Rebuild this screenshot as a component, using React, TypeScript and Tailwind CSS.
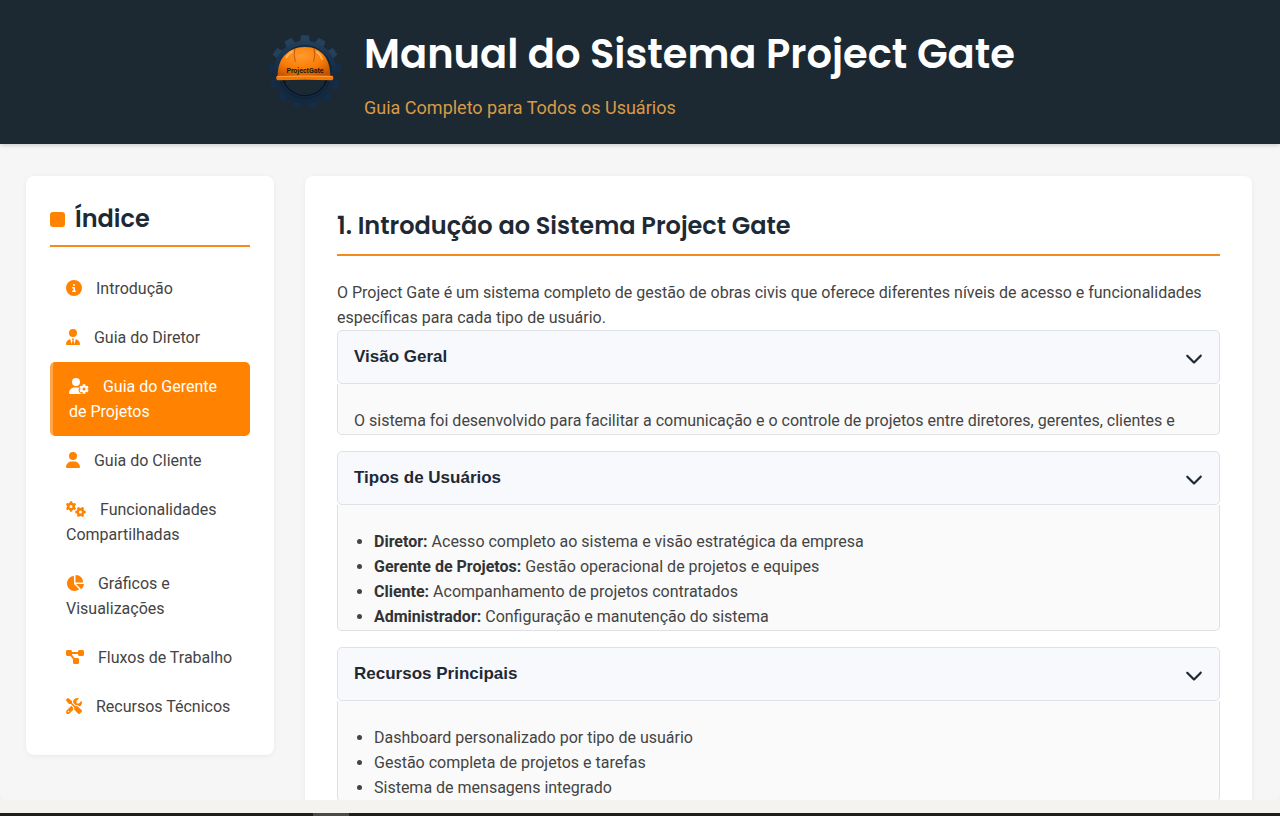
import type { ReactNode } from "react";
import type { IconType } from "react-icons";
import {
  FaChartPie,
  FaChevronDown,
  FaCircleInfo,
  FaDiagramProject,
  FaGears,
  FaScrewdriverWrench,
  FaUser,
  FaUserGear,
  FaUserTie,
} from "react-icons/fa6";

type NavItem = { label: string; icon: IconType; width: string; active?: boolean };

const navItems: NavItem[] = [
  { label: "Introdução", icon: FaCircleInfo, width: "w-4" },
  { label: "Guia do Diretor", icon: FaUserTie, width: "w-3.5" },
  { label: "Guia do Gerente de Projetos", icon: FaUserGear, width: "w-5", active: true },
  { label: "Guia do Cliente", icon: FaUser, width: "w-3.5" },
  { label: "Funcionalidades Compartilhadas", icon: FaGears, width: "w-5" },
  { label: "Gráficos e Visualizações", icon: FaChartPie, width: "w-[18px]" },
  { label: "Fluxos de Trabalho", icon: FaDiagramProject, width: "w-[18px]" },
  { label: "Recursos Técnicos", icon: FaScrewdriverWrench, width: "w-4" },
];

const userTypes = [
  { name: "Diretor:", text: "Acesso completo ao sistema e visão estratégica da empresa" },
  { name: "Gerente de Projetos:", text: "Gestão operacional de projetos e equipes" },
  { name: "Cliente:", text: "Acompanhamento de projetos contratados" },
  { name: "Administrador:", text: "Configuração e manutenção do sistema" },
];

const features = [
  "Dashboard personalizado por tipo de usuário",
  "Gestão completa de projetos e tarefas",
  "Sistema de mensagens integrado",
];

const teeth = Array.from({ length: 13 }, (_, i) => (i * 360) / 13);

function Logo() {
  return (
    <svg viewBox="12 18 240 240" className="size-20 shrink-0" role="img" aria-label="ProjectGate">
      <defs>
        <radialGradient id="dome" cx="0.45" cy="0.3" r="0.75">
          <stop offset="0" stopColor="#ff9a2e" />
          <stop offset="0.55" stopColor="#fb7d06" />
          <stop offset="1" stopColor="#c25200" />
        </radialGradient>
        <linearGradient id="gear" gradientUnits="userSpaceOnUse" x1="0" y1="25" x2="0" y2="245">
          <stop offset="0" stopColor="#24425e" />
          <stop offset="0.5" stopColor="#142b43" />
          <stop offset="1" stopColor="#12283e" />
        </linearGradient>
      </defs>
      {teeth.map((angle) => (
        <path
          key={angle}
          d="M117 50 L120 25 H144 L147 50 Z"
          fill={Math.cos((angle * Math.PI) / 180) > 0.3 ? "#24405b" : "#142c45"}
          transform={`rotate(${angle} 132 135)`}
        />
      ))}
      <circle cx="132" cy="135" r="80" fill="none" stroke="url(#gear)" strokeWidth="28" />
      <circle cx="132" cy="135" r="79" fill="none" stroke="#0e1f31" strokeWidth="3" />
      <circle cx="132" cy="135" r="69" fill="none" stroke="#091522" strokeWidth="7" />
      <path d="M74 168 A66 66 0 0 0 190 168" fill="none" stroke="#2a3d4f" strokeWidth="2" />
      <path d="M50 150 C48 96 80 60 132 60 C184 60 208 98 208 150 Z" fill="url(#dome)" />
      <path d="M102 64 Q96 82 103 104 M159 64 Q164 82 158 104" fill="none" stroke="#9c4300" strokeWidth="2" />
      <path d="M76 91 Q86 77 94 74 M168 75 Q180 84 183 96" fill="none" stroke="#ffb35c" strokeWidth="6" strokeLinecap="round" />
      <path d="M48 146 Q132 143 215 146 Q220 155 213 160 Q132 157 50 160 Q42 154 48 146 Z" fill="#f47700" />
      <path d="M49 149 Q132 146 213 149" fill="none" stroke="#ff9a35" strokeWidth="3" />
      <text x="132" y="138" textAnchor="middle" fontSize="21" fontWeight="700" fill="#271607" fontFamily="Roboto, sans-serif">
        ProjectGate
      </text>
    </svg>
  );
}

function Accordion({ title, children }: { title: string; children: ReactNode }) {
  return (
    <div className="mb-4">
      <h3>
        <button
          type="button"
          aria-expanded="true"
          className="flex w-full items-center justify-between rounded-[5px] border border-[#dee1e6] bg-[#f8f9fd] px-4 py-[14px] text-left font-['Liberation_Sans',Arial,sans-serif] text-[17px] leading-6 font-bold text-[#1d2a35]"
        >
          {title}
          <FaChevronDown className="mt-0.5 size-[18px]" />
        </button>
      </h3>
      <div className="rounded-b-[5px] border border-t-0 border-[#e0e0e2] bg-[#fafafa] px-4 pt-6 pb-px">{children}</div>
    </div>
  );
}

export default function App() {
  return (
    <div className="flex h-screen flex-col overflow-hidden bg-[#f4f3ef] font-[Roboto,sans-serif] text-base leading-[25px] text-[#444444]">
      <div className="min-h-0 flex-1 overflow-hidden rounded-b-lg bg-[#f6f6f6]">
        <header className="flex items-center justify-center gap-[19px] bg-[#1c2933] pt-[25px] pb-6 shadow-[0_1px_5px_rgba(0,0,0,0.2)]">
          <Logo />
          <div>
            <h1 className="mb-[11px] font-[Poppins,Inter,sans-serif] text-[40px] leading-[59px] font-semibold text-white">
              Manual do Sistema Project Gate
            </h1>
            <p className="text-lg leading-[25px] text-[#d99a45]">Guia Completo para Todos os Usuários</p>
          </div>
        </header>

        <div className="flex items-start gap-[31px] pt-8 pr-7 pl-[26px]">
          <aside className="w-[248px] shrink-0 rounded-lg bg-white p-6 shadow-[0_1px_5px_rgba(0,0,0,0.06)]">
            <h2 className="mb-[17px] flex items-center gap-[10px] border-b-2 border-[#f58a1c] pt-px pb-2 font-[Poppins,Inter,sans-serif] text-2xl leading-9 font-semibold text-[#1d2a35]">
              <span className="size-[15px] rounded-[3px] bg-[#ff8300]" />
              Índice
            </h2>
            <nav aria-label="Índice">
              <ul>
                {navItems.map(({ label, icon: Icon, width, active }) => (
                  <li key={label}>
                    <a
                      href="#introducao"
                      className={
                        active
                          ? "block rounded-[5px] border-l-3 border-[#ffa64a] bg-[#ff8300] py-3 pr-4 pl-4 text-white"
                          : "block rounded-[5px] px-4 py-3"
                      }
                    >
                      <Icon
                        className={`mr-[10px] inline-block h-4 align-[-2px] ${width} ${active ? "text-white" : "text-[#ff8300]"}`}
                      />{" "}
                      {label}
                    </a>
                  </li>
                ))}
              </ul>
            </nav>
          </aside>

          <main className="min-w-0 flex-1 rounded-lg bg-white p-8 shadow-[0_1px_5px_rgba(0,0,0,0.06)]">
            <section id="introducao">
              <h2 className="mb-6 border-b-2 border-[#f58a1c] pb-[10px] font-[Poppins,Inter,sans-serif] text-2xl leading-9 font-semibold text-[#1d2a35]">
                1. Introdução ao Sistema Project Gate
              </h2>
              <p>
                O Project Gate é um sistema completo de gestão de obras civis que oferece diferentes níveis de acesso e
                funcionalidades específicas para cada tipo de usuário.
              </p>
              <Accordion title="Visão Geral">
                <p>
                  O sistema foi desenvolvido para facilitar a comunicação e o controle de projetos entre diretores,
                  gerentes, clientes e
                </p>
              </Accordion>
              <Accordion title="Tipos de Usuários">
                <ul className="list-disc pl-5">
                  {userTypes.map(({ name, text }) => (
                    <li key={name}>
                      <strong className="font-bold text-[#333333]">{name}</strong> {text}
                    </li>
                  ))}
                </ul>
              </Accordion>
              <Accordion title="Recursos Principais">
                <ul className="list-disc pl-5">
                  {features.map((feature) => (
                    <li key={feature}>{feature}</li>
                  ))}
                </ul>
              </Accordion>
            </section>
          </main>
        </div>
      </div>
      <div className="h-[13px] shrink-0" />
      <div className="flex h-[3px] shrink-0 bg-[#1e1e1e]">
        <div className="ml-[313px] w-9 bg-[#4a4a4a]" />
      </div>
    </div>
  );
}
